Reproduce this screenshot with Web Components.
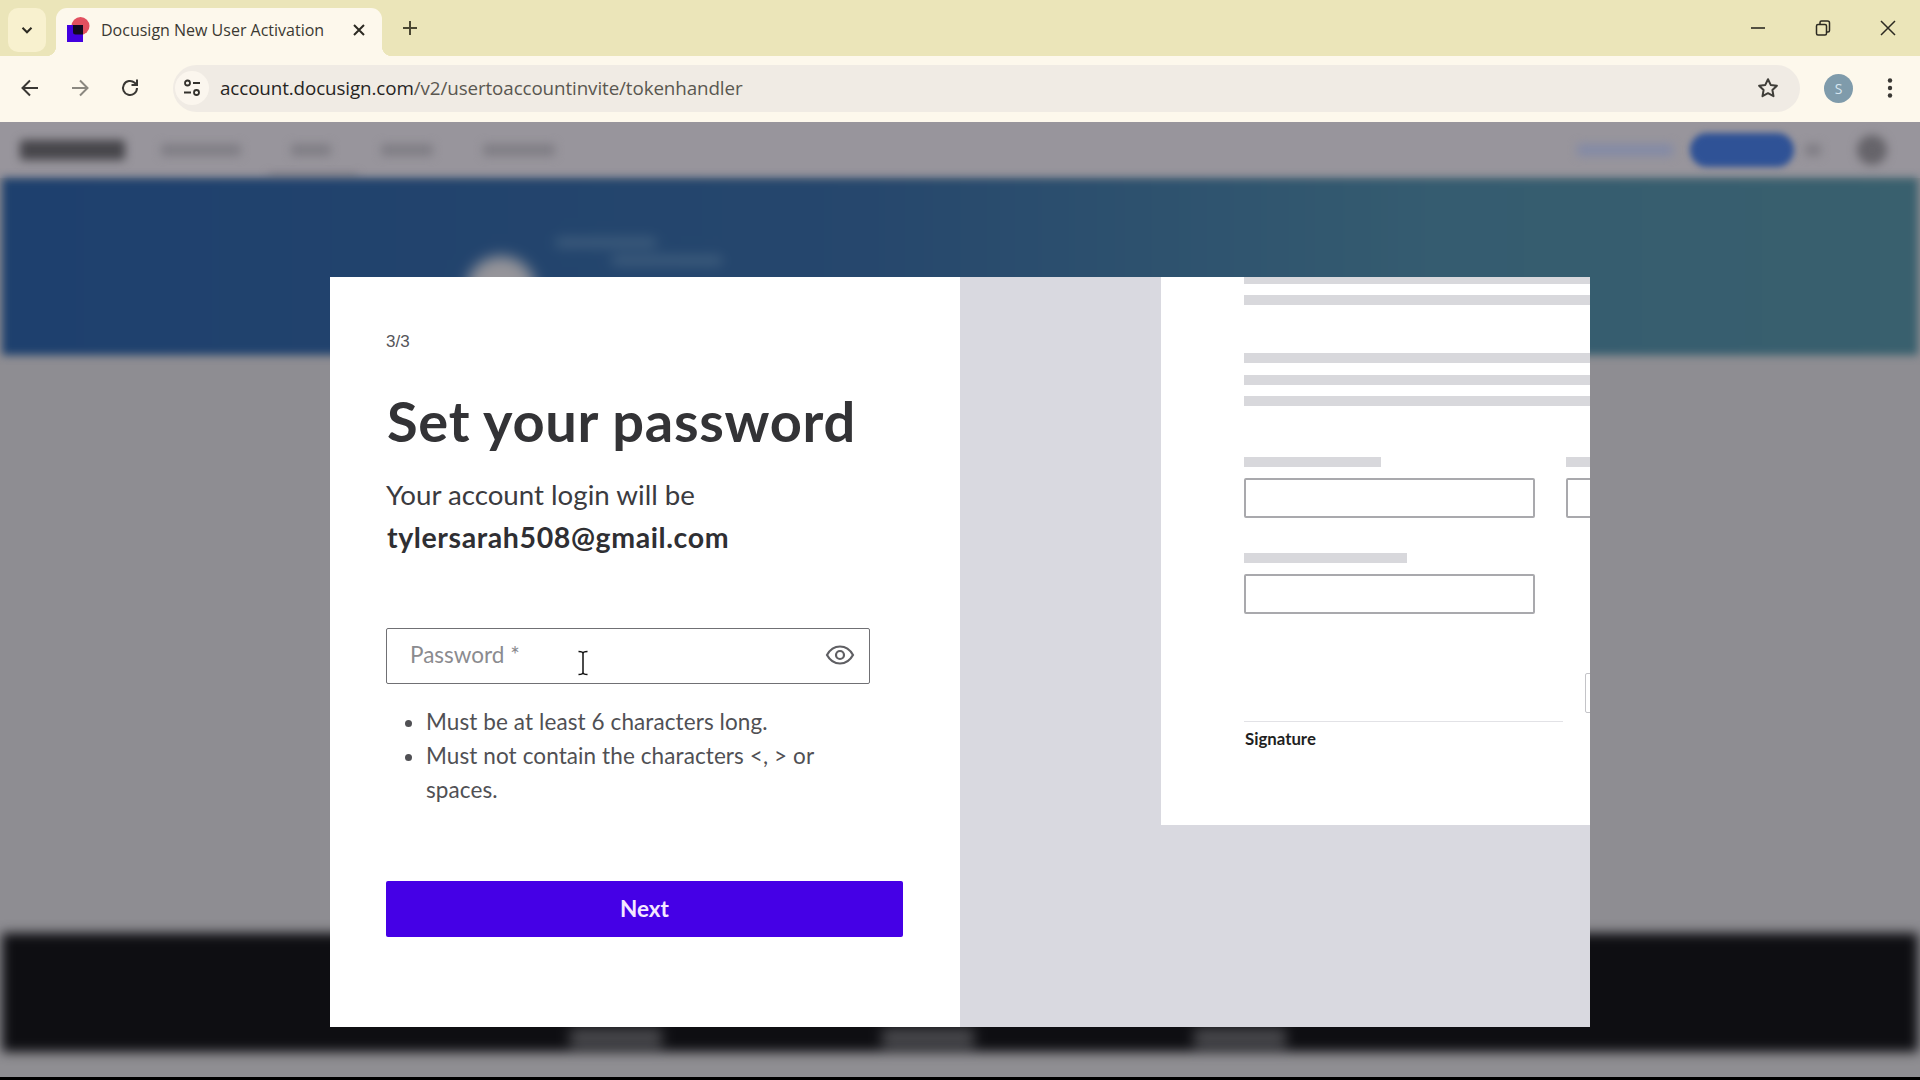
<!DOCTYPE html>
<html lang="en">
<head>
<meta charset="UTF-8">
<title>Docusign New User Activation</title>
<style>
  html, body { margin: 0; height: 100%; overflow: hidden; background: #000; }
  body { display: flex; flex-direction: column; height: 1080px; font-family: "Lato", "Liberation Sans", sans-serif; }
</style>
</head>
<body>
  <browser-tabs title-text="Docusign New User Activation"></browser-tabs>
  <browser-toolbar host-part="account.docusign.com" path-part="/v2/usertoaccountinvite/tokenhandler"></browser-toolbar>
  <app-page>
    <invite-modal>
      <span slot="step">3/3</span>
      <span slot="title">Set your password</span>
      <span slot="intro">Your account login will be</span>
      <span slot="email">tylersarah508@gmail.com</span>
      <password-field slot="field" placeholder="Password *"></password-field>
      <li slot="rules">Must be at least 6 characters long.</li>
      <li slot="rules">Must not contain the characters &lt;, &gt; or spaces.</li>
      <span slot="action">Next</span>
      <doc-preview slot="preview"></doc-preview>
    </invite-modal>
  </app-page>

<script>
function shadow(el, html) {
  el.attachShadow({mode: "open"}).innerHTML = html;
}

class BrowserTabs extends HTMLElement {
  connectedCallback() {
    shadow(this, `
    <style>
      :host { display: flex; height: 56px; background: #ebe5b9; color: #2c2a22; font-family: "Open Sans", "Liberation Sans", sans-serif; align-items: flex-end; flex: none; }
      .search { width: 38px; height: 44px; margin: 0 10px 4px 8px; border-radius: 10px; background: #f8f1cf; display: grid; place-items: center; }
      .tab { position: relative; width: 326px; height: 48px; background: #fdf8ec; border-radius: 11px 11px 0 0; display: flex; align-items: center; box-sizing: border-box; padding: 0 0 4px 10px; }
      .tab::before, .tab::after { content: ""; position: absolute; bottom: 0; width: 10px; height: 10px; background: radial-gradient(circle at 0 0, transparent 10px, #fdf8ec 10.5px); }
      .tab::before { left: -10px; }
      .tab::after { right: -10px; transform: scaleX(-1); }
      .title { margin-left: 11px; width: 228px; font-size: 16px; white-space: nowrap; overflow: hidden; color: #3b3932; }
      .close { margin-left: 23px; display: grid; }
      .plus { margin-bottom: 4px; height: 48px; display: grid; place-items: center; }
      .win { margin-left: auto; display: flex; height: 56px; align-items: center; }
      .win svg { display: block; }
      .win span { width: 65px; display: grid; place-items: center; }
    </style>
    <div class="search"><svg width="14" height="14" viewBox="0 0 14 14"><path d="M2.5 4.800 7 9.300l4.500-4.500" fill="none" stroke="#2c2a22" stroke-width="2"/></svg></div>
    <div class="tab">
      <svg width="24" height="26" viewBox="0 0 24 26">
        <circle cx="14.500" cy="9" r="9" fill="#e2505f"/>
        <rect x="1" y="8" width="16" height="17" fill="#4300e0"/>
        <path d="M7 8h10v9.500H9.500A2.500 2.500 0 0 1 7 15z" fill="#120a20"/>
      </svg>
      <span class="title">${this.getAttribute("title-text")}</span>
      <span class="close"><svg width="14" height="14" viewBox="0 0 14 14"><path d="M2 2l10 10M12 2 2 12" stroke="#2c2a22" stroke-width="2"/></svg></span>
    </div>
    <div class="plus" style="margin-left:20px"><svg width="16" height="16" viewBox="0 0 16 16"><path d="M8 1v14M1 8h14" stroke="#4a4732" stroke-width="2"/></svg></div>
    <div class="win">
      <span><svg width="16" height="16" viewBox="0 0 16 16"><path d="M1 8h14" stroke="#2c2a22" stroke-width="1.600"/></svg></span>
      <span><svg width="16" height="16" viewBox="0 0 16 16" fill="none" stroke="#2c2a22" stroke-width="1.500"><rect x="1.500" y="4.500" width="10" height="10.500" rx="1.500"/><path d="M5 4.500V2.500A1.500 1.500 0 0 1 6.500 1h6A2 2 0 0 1 14.500 3v7.500A1.500 1.500 0 0 1 13 12h-1.500"/></svg></span>
      <span><svg width="18" height="18" viewBox="0 0 18 18"><path d="M2 2l14 14M16 2 2 16" stroke="#2c2a22" stroke-width="1.500"/></svg></span>
    </div>`);
  }
}
customElements.define("browser-tabs", BrowserTabs);

class BrowserToolbar extends HTMLElement {
  connectedCallback() {
    shadow(this, `
    <style>
      :host { display: flex; align-items: center; height: 66px; background: #fdf8ec; flex: none; font-family: "Open Sans", "Liberation Sans", sans-serif; box-sizing: border-box; padding: 0 0 2px 5px; }
      .nav { width: 50px; display: grid; place-items: center; }
      .omni { margin-left: 18px; width: 1627px; height: 47px; border-radius: 24px; background: #f0ebe4; display: flex; align-items: center; box-sizing: border-box; padding: 0 0 0 2px; }
      .tune { width: 34px; height: 34px; border-radius: 50%; background: #fbf6ee; display: grid; place-items: center; }
      .url { margin-left: 11px; font-size: 18.800px; color: #5a5750; white-space: nowrap; letter-spacing: -.1px; }
      .url b { font-weight: 400; color: #26241f; }
      .star { margin-left: auto; margin-right: 20px; display: grid; }
      .avatar { margin-left: 24px; width: 29px; height: 29px; border-radius: 50%; background: #7f9bab; color: #d6e6f0; font-size: 14px; display: grid; place-items: center; }
      .menu { margin-left: 34px; display: grid; }
    </style>
    <span class="nav"><svg width="22" height="22" viewBox="0 0 22 22"><path d="M19 11H4M11 3.500 3.500 11l7.500 7.500" fill="none" stroke="#3a3834" stroke-width="2"/></svg></span>
    <span class="nav"><svg width="22" height="22" viewBox="0 0 22 22"><path d="M3 11h15M11 3.500l7.500 7.500-7.500 7.500" fill="none" stroke="#8b8880" stroke-width="2"/></svg></span>
    <span class="nav"><svg width="22" height="22" viewBox="0 0 22 22"><path d="M18 11a7 7 0 1 1-2.300-5.200L18 8M18 2.500V8h-5.500" fill="none" stroke="#3a3834" stroke-width="2"/></svg></span>
    <div class="omni">
      <span class="tune"><svg width="20" height="20" viewBox="0 0 20 20" fill="none" stroke="#33312c" stroke-width="1.800"><circle cx="5.500" cy="5" r="2.500"/><path d="M11 5h7M2 14.500h7"/><circle cx="14.500" cy="14.500" r="2.500"/></svg></span>
      <span class="url"><b>${this.getAttribute("host-part")}</b>${this.getAttribute("path-part")}</span>
      <span class="star"><svg width="24" height="24" viewBox="0 0 24 24"><path d="M12 3.200l2.700 5.700 6.200.8-4.500 4.300 1.100 6.200L12 17.200l-5.500 3 1.100-6.200-4.500-4.300 6.200-.8z" fill="none" stroke="#403e39" stroke-width="2" stroke-linejoin="round"/></svg></span>
    </div>
    <span class="avatar">S</span>
    <span class="menu"><svg width="6" height="24" viewBox="0 0 6 24" fill="#3a3834"><circle cx="3" cy="4.500" r="2.200"/><circle cx="3" cy="12" r="2.200"/><circle cx="3" cy="19.500" r="2.200"/></svg></span>`);
  }
}
customElements.define("browser-toolbar", BrowserToolbar);

// page behind the modal, only visible blurred
class AppPage extends HTMLElement {
  connectedCallback() {
    shadow(this, `
    <style>
      :host { display: flex; flex-direction: column; flex: 1; position: relative; background: #8e8d92; overflow: hidden; }
      .header { height: 56px; background: #98959c; display: flex; align-items: center; padding: 0 20px; flex: none; position: relative; }
      .header > * { filter: blur(5px); }
      .logo { width: 105px; height: 20px; background: #47464b; border-radius: 3px; }
      .nav { height: 12px; background: #807e85; border-radius: 3px; }
      .pill { width: 104px; height: 34px; border-radius: 18px; background: #2f5296; filter: blur(3px); }
      .hero { height: 177px; margin: 0 2px; flex: none; background: linear-gradient(90deg, #1e406e 0%, #26476d 45%, #355c70 75%, #39606e 100%); filter: blur(4px); position: relative; display: flex; align-items: flex-start; }
      .face { margin: 78px 0 0 464px; width: 70px; height: 70px; border-radius: 50%; background: #96959a; filter: blur(6px); }
      .lines { margin: 60px 0 0 20px; display: flex; flex-direction: column; gap: 9px; filter: blur(5px); }
      .lines i { display: block; height: 9px; background: #42607f; }
      .mid { flex: 1; }
      .footer { height: 119px; flex: none; background: #0e0e12; filter: blur(6px); margin: 0 2px; display: flex; align-items: flex-end; padding-left: 568px; gap: 220px; box-sizing: border-box; padding-bottom: 4px; }
      .footer i { display: block; width: 92px; height: 20px; background: #48484c; filter: blur(3px); }
      .tail { height: 25px; flex: none; background: #8f8e92; }
      .edge { height: 3px; flex: none; background: #000; }
      ::slotted(*) { position: absolute; left: 330px; top: 155px; }
    </style>
    <div class="header">
      <div class="logo"></div>
      <div class="nav" style="width:80px;margin-left:36px"></div>
      <div class="nav" style="width:40px;margin-left:50px"></div>
      <div class="nav" style="width:52px;margin-left:50px"></div>
      <div class="nav" style="width:72px;margin-left:50px"></div>
      <div class="nav" style="width:96px;margin-left:auto;background:#838aa6"></div>
      <div class="pill" style="margin-left:17px"></div>
      <div class="nav" style="width:16px;margin-left:11px"></div>
      <div class="nav" style="width:30px;height:30px;border-radius:50%;margin-left:36px;margin-right:13px;background:#66646a"></div>
      <div style="position:absolute;left:268px;bottom:0;width:90px;height:4px;background:#77757c"></div>
    </div>
    <div class="hero">
      <div class="face"></div>
      <div class="lines"><i style="width:100px"></i><i style="width:110px;margin-left:56px"></i></div>
    </div>
    <div class="mid"></div>
    <div class="footer"><i></i><i></i><i></i></div>
    <div class="tail"></div>
    <div class="edge"></div>
    <slot></slot>`);
  }
}
customElements.define("app-page", AppPage);

class InviteModal extends HTMLElement {
  connectedCallback() {
    shadow(this, `
    <style>
      :host { display: grid; grid-template-columns: 630px 630px; width: 1260px; height: 750px; color: #2f2f33; }
      .form { background: #fff; box-sizing: border-box; padding: 55px 56px 0; display: flex; flex-direction: column; }
      .step { font: 17px/20px "Liberation Sans", sans-serif; color: #55555a; }
      h1 { margin: 34px 0 0 1px; font: 700 56px/70px "Lato", sans-serif; color: #333336; letter-spacing: .7px; white-space: nowrap; }
      .intro { margin-top: 18px; font: 400 27.700px/42px "Lato", sans-serif; color: #3b3b3f; }
      .email { font: 700 28.500px/42px "Lato", sans-serif; color: #2f2f33; letter-spacing: .6px; margin-left: 1px; }
      .field { margin-top: 70px; width: 484px; }
      ul { margin: 21px 0 0; padding: 0 0 0 40px; width: 430px; font: 400 22.500px/34px "Lato", sans-serif; letter-spacing: .1px; color: #505054; }
      button { margin-top: 74px; width: 517px; height: 56px; border: 0; border-radius: 2px; background: #4500e6; color: #f4e8ff; font: 700 22.500px "Lato", sans-serif; padding: 0 0 2px; }
      .side { background: #d9d9e0; min-width: 0; }
    </style>
    <div class="form">
      <div class="step"><slot name="step"></slot></div>
      <h1><slot name="title"></slot></h1>
      <div class="intro"><slot name="intro"></slot></div>
      <div class="email"><slot name="email"></slot></div>
      <div class="field"><slot name="field"></slot></div>
      <ul><slot name="rules"></slot></ul>
      <button><slot name="action"></slot></button>
    </div>
    <div class="side"><slot name="preview"></slot></div>`);
  }
}
customElements.define("invite-modal", InviteModal);

class PasswordField extends HTMLElement {
  connectedCallback() {
    shadow(this, `
    <style>
      :host { display: flex; position: relative; align-items: center; box-sizing: border-box; height: 56px; border: 1.500px solid #707074; border-radius: 2px; padding: 0 14px 0 23px; font: 400 22.500px "Lato", sans-serif; color: #8b8b8f; }
      span { flex: 1; padding-bottom: 4px; }
      svg { margin-bottom: 2px; }
      .caret { position: absolute; left: 190px; top: 21px; }
    </style>
    <span>${this.getAttribute("placeholder")}</span>
    <svg width="30" height="22" viewBox="0 0 30 22" fill="none" stroke="#5f5f63" stroke-width="2.200">
      <path d="M2 11C5 5.500 9.500 2.500 15 2.500S25 5.500 28 11c-3 5.500-7.500 8.500-13 8.500S5 16.500 2 11z"/>
      <circle cx="15" cy="11" r="4"/>
    </svg>
    <svg class="caret" width="12" height="26" viewBox="0 0 12 26" fill="none" stroke="#111" stroke-width="1.500"><path d="M1.500 1.500c2.500 0 4.500.5 4.500 2v19c0 1.500-2 2-4.500 2M10.500 1.500c-2.500 0-4.500.5-4.500 2v19c0 1.500 2 2 4.500 2"/></svg>`);
  }
}
customElements.define("password-field", PasswordField);

class DocPreview extends HTMLElement {
  connectedCallback() {
    shadow(this, `
    <style>
      :host { display: block; margin-left: 201px; width: 429px; height: 548px; background: #fff; overflow: hidden; box-sizing: border-box; padding-left: 83px; font-family: "Lato", sans-serif; }
      .bar { height: 10px; background: #d8d8dc; filter: blur(.7px); width: 360px; }
      .box { height: 40px; box-sizing: border-box; border: 2px solid #a9a9ad; border-radius: 2px; width: 291px; }
      .row { display: flex; gap: 31px; width: 500px; }
      .row > div { width: 291px; flex: none; }
      .sig-line { height: 1px; width: 319px; background: #e2e2e6; margin-top: 8px; }
      .sig { margin: 8px 0 0 1px; font: 700 16.800px/18px "Lato", sans-serif; color: #1f1f22; }
    </style>
    <div class="bar" style="height:7px"></div>
    <div class="bar" style="margin-top:11px"></div>
    <div class="bar" style="margin-top:48px"></div>
    <div class="bar" style="margin-top:12px"></div>
    <div class="bar" style="margin-top:11px"></div>
    <div class="row" style="margin-top:51px">
      <div><div class="bar" style="width:137px"></div><div class="box" style="margin-top:11px"></div></div>
      <div><div class="bar"></div><div class="box" style="margin-top:11px"></div></div>
    </div>
    <div class="bar" style="width:163px;margin-top:35px"></div>
    <div class="box" style="margin-top:11px"></div>
    <div class="box" style="margin:59px 0 0 341px;border-width:1.500px;border-color:#c4c4c8"></div>
    <div class="sig-line"></div>
    <div class="sig">Signature</div>`);
  }
}
customElements.define("doc-preview", DocPreview);
</script>
</body>
</html>
